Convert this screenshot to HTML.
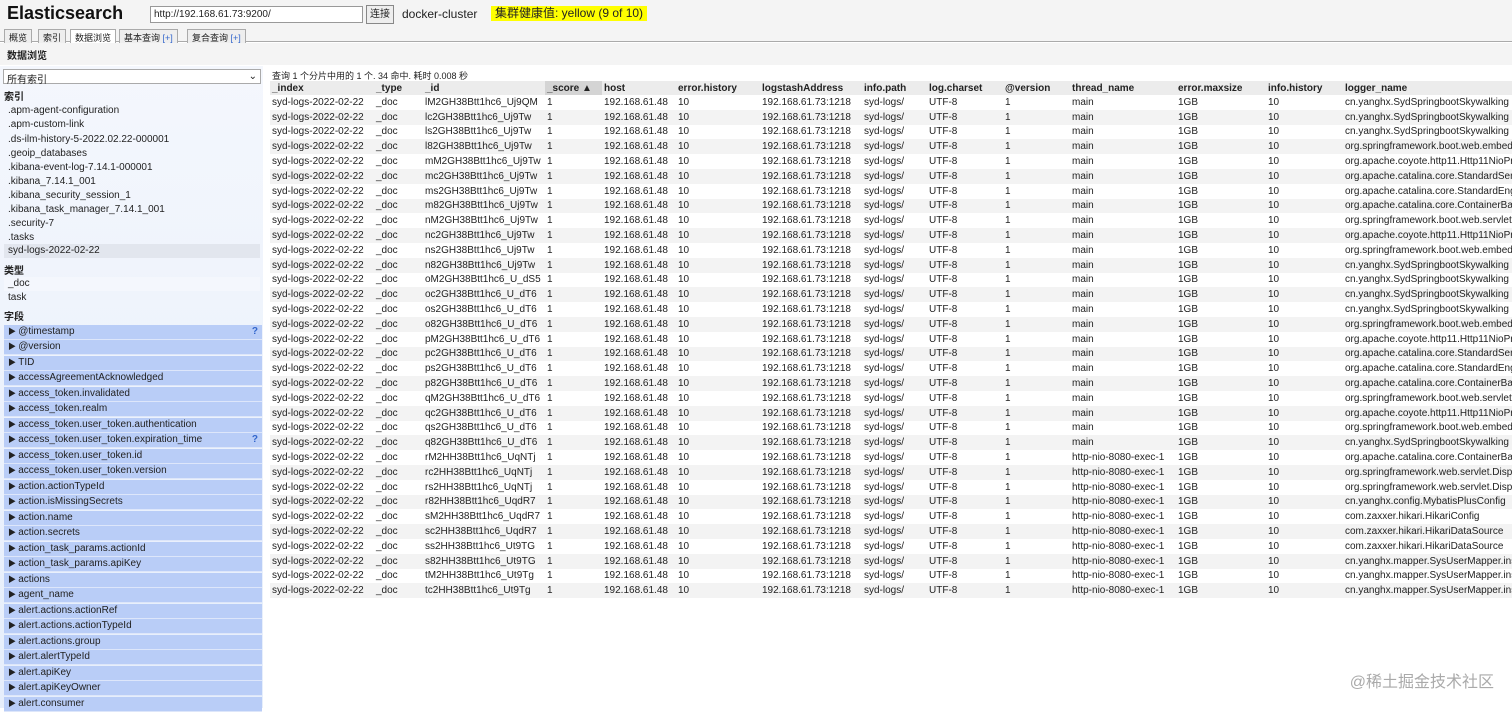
<!DOCTYPE html>
<html><head><meta charset="utf-8"><style>
*{margin:0;padding:0;box-sizing:border-box}
body{width:1512px;height:708px;overflow:hidden;background:#fff;font-family:"Liberation Sans","Noto Sans CJK SC",sans-serif;font-size:10px;color:#222;position:relative}
.top{position:absolute;left:0;top:0;width:1512px;height:28px;background:#f4f4f4}
h1{position:absolute;left:7px;top:3px;font-size:18px;font-weight:bold;color:#111}
.url{position:absolute;left:150px;top:6px;width:213px;height:17px;border:1px solid #999;background:#fff;font-size:10px;padding:2px 3px}
.btn{position:absolute;left:366px;top:5px;width:28px;height:19px;border:1px solid #888;background:#eee;font-size:10px;text-align:center;line-height:17px}
.cl{position:absolute;left:402px;top:7px;font-size:12px}
.health{position:absolute;left:491px;top:6px;height:15px;background:#ff0;font-size:12px;padding:0 4px;line-height:15px}
.tabs{position:absolute;left:0;top:28px;width:1512px;height:14px;border-bottom:1px solid #aaa;background:#f4f4f4}
.tab{position:absolute;top:1px;height:14px;border:1px solid #aaa;border-bottom:none;background:#eee;font-size:9px;padding:1px 4px}
.tab.on{background:#fff;height:15px}
.b{color:#36c}
.sub{position:absolute;left:0;top:43px;width:1512px;height:22px;background:#f4f4f4;font-size:10px;padding:4px 7px;font-weight:bold}
.left{position:absolute;left:0;top:66px;width:263px;height:642px;background:linear-gradient(#f4f7fd,#e6eefb)}
.sel{position:absolute;left:3px;top:3px;width:258px;height:15px;border:1px solid #aaa;background:#fff;font-size:10px;padding:1px 3px}
.hd{position:absolute;left:4px;font-weight:bold;font-size:10px}
.it{position:absolute;left:4px;width:256px;height:14px;padding-left:4px;line-height:14px}
.f{position:absolute;left:4px;width:258px;height:14.5px;background:#b9cdf7;padding-left:4px;line-height:14px;border-bottom:1px solid #dde6fa}
.f:before{content:"▶ ";font-size:8px}
.q{position:absolute;right:4px;color:#36c;font-weight:bold}
.info{position:absolute;left:272px;top:69px;font-size:9px}
table{position:absolute;left:270px;top:81px;border-collapse:collapse;table-layout:fixed;width:1300px;white-space:nowrap}
th{background:#ececec;text-align:left;font-weight:bold;height:14px;padding:0 2px;font-size:10px;overflow:hidden}
th.s{background:#d4d4d4}
td{height:14.8px;padding:0 2px;overflow:hidden;font-size:10px}
tr:nth-child(odd) td{background:#f3f3f3}
.wm{position:absolute;right:18px;top:668px;font-size:16px;color:#aaa}
</style></head><body>
<div class="top"><h1>Elasticsearch</h1><div class="url">http://192.168.61.73:9200/</div><div class="btn">连接</div><div class="cl">docker-cluster</div><div class="health">集群健康值: yellow (9 of 10)</div></div>
<div class="tabs"><div class="tab" style="left:4px">概览</div><div class="tab" style="left:38px">索引</div><div class="tab on" style="left:70px">数据浏览</div><div class="tab" style="left:119px">基本查询 <span class="b">[+]</span></div><div class="tab" style="left:187px">复合查询 <span class="b">[+]</span></div></div>
<div class="sub">数据浏览</div>
<div class="left">
<div class="sel">所有索引<span style="float:right">⌄</span></div>
<div class="hd" style="top:22px">索引</div>
<div class="it" style="top:38px">.apm-agent-configuration</div>
<div class="it" style="top:52px">.apm-custom-link</div>
<div class="it" style="top:67px">.ds-ilm-history-5-2022.02.22-000001</div>
<div class="it" style="top:81px">.geoip_databases</div>
<div class="it" style="top:95px">.kibana-event-log-7.14.1-000001</div>
<div class="it" style="top:109px">.kibana_7.14.1_001</div>
<div class="it" style="top:123px">.kibana_security_session_1</div>
<div class="it" style="top:137px">.kibana_task_manager_7.14.1_001</div>
<div class="it" style="top:151px">.security-7</div>
<div class="it" style="top:165px">.tasks</div>
<div class="it" style="top:178px;background:#e2e6ee">syd-logs-2022-02-22</div>
<div class="hd" style="top:196px">类型</div>
<div class="it" style="top:211px;background:#f4f7fd">_doc</div>
<div class="it" style="top:225px">task</div>
<div class="hd" style="top:242px">字段</div>
<div class="f" style="top:259px">@timestamp<span class="q">?</span></div>
<div class="f" style="top:274px">@version</div>
<div class="f" style="top:290px">TID</div>
<div class="f" style="top:305px">accessAgreementAcknowledged</div>
<div class="f" style="top:321px">access_token.invalidated</div>
<div class="f" style="top:336px">access_token.realm</div>
<div class="f" style="top:352px">access_token.user_token.authentication</div>
<div class="f" style="top:367px">access_token.user_token.expiration_time<span class="q">?</span></div>
<div class="f" style="top:383px">access_token.user_token.id</div>
<div class="f" style="top:398px">access_token.user_token.version</div>
<div class="f" style="top:414px">action.actionTypeId</div>
<div class="f" style="top:429px">action.isMissingSecrets</div>
<div class="f" style="top:445px">action.name</div>
<div class="f" style="top:460px">action.secrets</div>
<div class="f" style="top:476px">action_task_params.actionId</div>
<div class="f" style="top:491px">action_task_params.apiKey</div>
<div class="f" style="top:507px">actions</div>
<div class="f" style="top:522px">agent_name</div>
<div class="f" style="top:538px">alert.actions.actionRef</div>
<div class="f" style="top:553px">alert.actions.actionTypeId</div>
<div class="f" style="top:569px">alert.actions.group</div>
<div class="f" style="top:584px">alert.alertTypeId</div>
<div class="f" style="top:600px">alert.apiKey</div>
<div class="f" style="top:615px">alert.apiKeyOwner</div>
<div class="f" style="top:631px">alert.consumer</div>
</div>
<div class="info">查询 1 个分片中用的 1 个. 34 命中. 耗时 0.008 秒</div>
<table>
<colgroup><col style="width:104px"><col style="width:49px"><col style="width:122px"><col style="width:57px"><col style="width:74px"><col style="width:84px"><col style="width:102px"><col style="width:65px"><col style="width:76px"><col style="width:67px"><col style="width:106px"><col style="width:90px"><col style="width:77px"><col style="width:227px"></colgroup>
<tr><th>_index</th><th>_type</th><th>_id</th><th class="s">_score ▲</th><th>host</th><th>error.history</th><th>logstashAddress</th><th>info.path</th><th>log.charset</th><th>@version</th><th>thread_name</th><th>error.maxsize</th><th>info.history</th><th>logger_name</th></tr>
<tr><td>syd-logs-2022-02-22</td><td>_doc</td><td>lM2GH38Btt1hc6_Uj9QM</td><td>1</td><td>192.168.61.48</td><td>10</td><td>192.168.61.73:1218</td><td>syd-logs/</td><td>UTF-8</td><td>1</td><td>main</td><td>1GB</td><td>10</td><td>cn.yanghx.SydSpringbootSkywalking</td></tr>
<tr><td>syd-logs-2022-02-22</td><td>_doc</td><td>lc2GH38Btt1hc6_Uj9Tw</td><td>1</td><td>192.168.61.48</td><td>10</td><td>192.168.61.73:1218</td><td>syd-logs/</td><td>UTF-8</td><td>1</td><td>main</td><td>1GB</td><td>10</td><td>cn.yanghx.SydSpringbootSkywalking</td></tr>
<tr><td>syd-logs-2022-02-22</td><td>_doc</td><td>ls2GH38Btt1hc6_Uj9Tw</td><td>1</td><td>192.168.61.48</td><td>10</td><td>192.168.61.73:1218</td><td>syd-logs/</td><td>UTF-8</td><td>1</td><td>main</td><td>1GB</td><td>10</td><td>cn.yanghx.SydSpringbootSkywalking</td></tr>
<tr><td>syd-logs-2022-02-22</td><td>_doc</td><td>l82GH38Btt1hc6_Uj9Tw</td><td>1</td><td>192.168.61.48</td><td>10</td><td>192.168.61.73:1218</td><td>syd-logs/</td><td>UTF-8</td><td>1</td><td>main</td><td>1GB</td><td>10</td><td>org.springframework.boot.web.embedded</td></tr>
<tr><td>syd-logs-2022-02-22</td><td>_doc</td><td>mM2GH38Btt1hc6_Uj9Tw</td><td>1</td><td>192.168.61.48</td><td>10</td><td>192.168.61.73:1218</td><td>syd-logs/</td><td>UTF-8</td><td>1</td><td>main</td><td>1GB</td><td>10</td><td>org.apache.coyote.http11.Http11NioProtocol</td></tr>
<tr><td>syd-logs-2022-02-22</td><td>_doc</td><td>mc2GH38Btt1hc6_Uj9Tw</td><td>1</td><td>192.168.61.48</td><td>10</td><td>192.168.61.73:1218</td><td>syd-logs/</td><td>UTF-8</td><td>1</td><td>main</td><td>1GB</td><td>10</td><td>org.apache.catalina.core.StandardService</td></tr>
<tr><td>syd-logs-2022-02-22</td><td>_doc</td><td>ms2GH38Btt1hc6_Uj9Tw</td><td>1</td><td>192.168.61.48</td><td>10</td><td>192.168.61.73:1218</td><td>syd-logs/</td><td>UTF-8</td><td>1</td><td>main</td><td>1GB</td><td>10</td><td>org.apache.catalina.core.StandardEngine</td></tr>
<tr><td>syd-logs-2022-02-22</td><td>_doc</td><td>m82GH38Btt1hc6_Uj9Tw</td><td>1</td><td>192.168.61.48</td><td>10</td><td>192.168.61.73:1218</td><td>syd-logs/</td><td>UTF-8</td><td>1</td><td>main</td><td>1GB</td><td>10</td><td>org.apache.catalina.core.ContainerBase</td></tr>
<tr><td>syd-logs-2022-02-22</td><td>_doc</td><td>nM2GH38Btt1hc6_Uj9Tw</td><td>1</td><td>192.168.61.48</td><td>10</td><td>192.168.61.73:1218</td><td>syd-logs/</td><td>UTF-8</td><td>1</td><td>main</td><td>1GB</td><td>10</td><td>org.springframework.boot.web.servlet</td></tr>
<tr><td>syd-logs-2022-02-22</td><td>_doc</td><td>nc2GH38Btt1hc6_Uj9Tw</td><td>1</td><td>192.168.61.48</td><td>10</td><td>192.168.61.73:1218</td><td>syd-logs/</td><td>UTF-8</td><td>1</td><td>main</td><td>1GB</td><td>10</td><td>org.apache.coyote.http11.Http11NioProtocol</td></tr>
<tr><td>syd-logs-2022-02-22</td><td>_doc</td><td>ns2GH38Btt1hc6_Uj9Tw</td><td>1</td><td>192.168.61.48</td><td>10</td><td>192.168.61.73:1218</td><td>syd-logs/</td><td>UTF-8</td><td>1</td><td>main</td><td>1GB</td><td>10</td><td>org.springframework.boot.web.embedded</td></tr>
<tr><td>syd-logs-2022-02-22</td><td>_doc</td><td>n82GH38Btt1hc6_Uj9Tw</td><td>1</td><td>192.168.61.48</td><td>10</td><td>192.168.61.73:1218</td><td>syd-logs/</td><td>UTF-8</td><td>1</td><td>main</td><td>1GB</td><td>10</td><td>cn.yanghx.SydSpringbootSkywalking</td></tr>
<tr><td>syd-logs-2022-02-22</td><td>_doc</td><td>oM2GH38Btt1hc6_U_dS5</td><td>1</td><td>192.168.61.48</td><td>10</td><td>192.168.61.73:1218</td><td>syd-logs/</td><td>UTF-8</td><td>1</td><td>main</td><td>1GB</td><td>10</td><td>cn.yanghx.SydSpringbootSkywalking</td></tr>
<tr><td>syd-logs-2022-02-22</td><td>_doc</td><td>oc2GH38Btt1hc6_U_dT6</td><td>1</td><td>192.168.61.48</td><td>10</td><td>192.168.61.73:1218</td><td>syd-logs/</td><td>UTF-8</td><td>1</td><td>main</td><td>1GB</td><td>10</td><td>cn.yanghx.SydSpringbootSkywalking</td></tr>
<tr><td>syd-logs-2022-02-22</td><td>_doc</td><td>os2GH38Btt1hc6_U_dT6</td><td>1</td><td>192.168.61.48</td><td>10</td><td>192.168.61.73:1218</td><td>syd-logs/</td><td>UTF-8</td><td>1</td><td>main</td><td>1GB</td><td>10</td><td>cn.yanghx.SydSpringbootSkywalking</td></tr>
<tr><td>syd-logs-2022-02-22</td><td>_doc</td><td>o82GH38Btt1hc6_U_dT6</td><td>1</td><td>192.168.61.48</td><td>10</td><td>192.168.61.73:1218</td><td>syd-logs/</td><td>UTF-8</td><td>1</td><td>main</td><td>1GB</td><td>10</td><td>org.springframework.boot.web.embedded</td></tr>
<tr><td>syd-logs-2022-02-22</td><td>_doc</td><td>pM2GH38Btt1hc6_U_dT6</td><td>1</td><td>192.168.61.48</td><td>10</td><td>192.168.61.73:1218</td><td>syd-logs/</td><td>UTF-8</td><td>1</td><td>main</td><td>1GB</td><td>10</td><td>org.apache.coyote.http11.Http11NioProtocol</td></tr>
<tr><td>syd-logs-2022-02-22</td><td>_doc</td><td>pc2GH38Btt1hc6_U_dT6</td><td>1</td><td>192.168.61.48</td><td>10</td><td>192.168.61.73:1218</td><td>syd-logs/</td><td>UTF-8</td><td>1</td><td>main</td><td>1GB</td><td>10</td><td>org.apache.catalina.core.StandardService</td></tr>
<tr><td>syd-logs-2022-02-22</td><td>_doc</td><td>ps2GH38Btt1hc6_U_dT6</td><td>1</td><td>192.168.61.48</td><td>10</td><td>192.168.61.73:1218</td><td>syd-logs/</td><td>UTF-8</td><td>1</td><td>main</td><td>1GB</td><td>10</td><td>org.apache.catalina.core.StandardEngine</td></tr>
<tr><td>syd-logs-2022-02-22</td><td>_doc</td><td>p82GH38Btt1hc6_U_dT6</td><td>1</td><td>192.168.61.48</td><td>10</td><td>192.168.61.73:1218</td><td>syd-logs/</td><td>UTF-8</td><td>1</td><td>main</td><td>1GB</td><td>10</td><td>org.apache.catalina.core.ContainerBase</td></tr>
<tr><td>syd-logs-2022-02-22</td><td>_doc</td><td>qM2GH38Btt1hc6_U_dT6</td><td>1</td><td>192.168.61.48</td><td>10</td><td>192.168.61.73:1218</td><td>syd-logs/</td><td>UTF-8</td><td>1</td><td>main</td><td>1GB</td><td>10</td><td>org.springframework.boot.web.servlet</td></tr>
<tr><td>syd-logs-2022-02-22</td><td>_doc</td><td>qc2GH38Btt1hc6_U_dT6</td><td>1</td><td>192.168.61.48</td><td>10</td><td>192.168.61.73:1218</td><td>syd-logs/</td><td>UTF-8</td><td>1</td><td>main</td><td>1GB</td><td>10</td><td>org.apache.coyote.http11.Http11NioProtocol</td></tr>
<tr><td>syd-logs-2022-02-22</td><td>_doc</td><td>qs2GH38Btt1hc6_U_dT6</td><td>1</td><td>192.168.61.48</td><td>10</td><td>192.168.61.73:1218</td><td>syd-logs/</td><td>UTF-8</td><td>1</td><td>main</td><td>1GB</td><td>10</td><td>org.springframework.boot.web.embedded</td></tr>
<tr><td>syd-logs-2022-02-22</td><td>_doc</td><td>q82GH38Btt1hc6_U_dT6</td><td>1</td><td>192.168.61.48</td><td>10</td><td>192.168.61.73:1218</td><td>syd-logs/</td><td>UTF-8</td><td>1</td><td>main</td><td>1GB</td><td>10</td><td>cn.yanghx.SydSpringbootSkywalking</td></tr>
<tr><td>syd-logs-2022-02-22</td><td>_doc</td><td>rM2HH38Btt1hc6_UqNTj</td><td>1</td><td>192.168.61.48</td><td>10</td><td>192.168.61.73:1218</td><td>syd-logs/</td><td>UTF-8</td><td>1</td><td>http-nio-8080-exec-1</td><td>1GB</td><td>10</td><td>org.apache.catalina.core.ContainerBase</td></tr>
<tr><td>syd-logs-2022-02-22</td><td>_doc</td><td>rc2HH38Btt1hc6_UqNTj</td><td>1</td><td>192.168.61.48</td><td>10</td><td>192.168.61.73:1218</td><td>syd-logs/</td><td>UTF-8</td><td>1</td><td>http-nio-8080-exec-1</td><td>1GB</td><td>10</td><td>org.springframework.web.servlet.DispatcherServlet</td></tr>
<tr><td>syd-logs-2022-02-22</td><td>_doc</td><td>rs2HH38Btt1hc6_UqNTj</td><td>1</td><td>192.168.61.48</td><td>10</td><td>192.168.61.73:1218</td><td>syd-logs/</td><td>UTF-8</td><td>1</td><td>http-nio-8080-exec-1</td><td>1GB</td><td>10</td><td>org.springframework.web.servlet.DispatcherServlet</td></tr>
<tr><td>syd-logs-2022-02-22</td><td>_doc</td><td>r82HH38Btt1hc6_UqdR7</td><td>1</td><td>192.168.61.48</td><td>10</td><td>192.168.61.73:1218</td><td>syd-logs/</td><td>UTF-8</td><td>1</td><td>http-nio-8080-exec-1</td><td>1GB</td><td>10</td><td>cn.yanghx.config.MybatisPlusConfig</td></tr>
<tr><td>syd-logs-2022-02-22</td><td>_doc</td><td>sM2HH38Btt1hc6_UqdR7</td><td>1</td><td>192.168.61.48</td><td>10</td><td>192.168.61.73:1218</td><td>syd-logs/</td><td>UTF-8</td><td>1</td><td>http-nio-8080-exec-1</td><td>1GB</td><td>10</td><td>com.zaxxer.hikari.HikariConfig</td></tr>
<tr><td>syd-logs-2022-02-22</td><td>_doc</td><td>sc2HH38Btt1hc6_UqdR7</td><td>1</td><td>192.168.61.48</td><td>10</td><td>192.168.61.73:1218</td><td>syd-logs/</td><td>UTF-8</td><td>1</td><td>http-nio-8080-exec-1</td><td>1GB</td><td>10</td><td>com.zaxxer.hikari.HikariDataSource</td></tr>
<tr><td>syd-logs-2022-02-22</td><td>_doc</td><td>ss2HH38Btt1hc6_Ut9TG</td><td>1</td><td>192.168.61.48</td><td>10</td><td>192.168.61.73:1218</td><td>syd-logs/</td><td>UTF-8</td><td>1</td><td>http-nio-8080-exec-1</td><td>1GB</td><td>10</td><td>com.zaxxer.hikari.HikariDataSource</td></tr>
<tr><td>syd-logs-2022-02-22</td><td>_doc</td><td>s82HH38Btt1hc6_Ut9TG</td><td>1</td><td>192.168.61.48</td><td>10</td><td>192.168.61.73:1218</td><td>syd-logs/</td><td>UTF-8</td><td>1</td><td>http-nio-8080-exec-1</td><td>1GB</td><td>10</td><td>cn.yanghx.mapper.SysUserMapper.insert</td></tr>
<tr><td>syd-logs-2022-02-22</td><td>_doc</td><td>tM2HH38Btt1hc6_Ut9Tg</td><td>1</td><td>192.168.61.48</td><td>10</td><td>192.168.61.73:1218</td><td>syd-logs/</td><td>UTF-8</td><td>1</td><td>http-nio-8080-exec-1</td><td>1GB</td><td>10</td><td>cn.yanghx.mapper.SysUserMapper.insert</td></tr>
<tr><td>syd-logs-2022-02-22</td><td>_doc</td><td>tc2HH38Btt1hc6_Ut9Tg</td><td>1</td><td>192.168.61.48</td><td>10</td><td>192.168.61.73:1218</td><td>syd-logs/</td><td>UTF-8</td><td>1</td><td>http-nio-8080-exec-1</td><td>1GB</td><td>10</td><td>cn.yanghx.mapper.SysUserMapper.insert</td></tr>
</table>
<div class="wm">@稀土掘金技术社区</div>
</body></html>
